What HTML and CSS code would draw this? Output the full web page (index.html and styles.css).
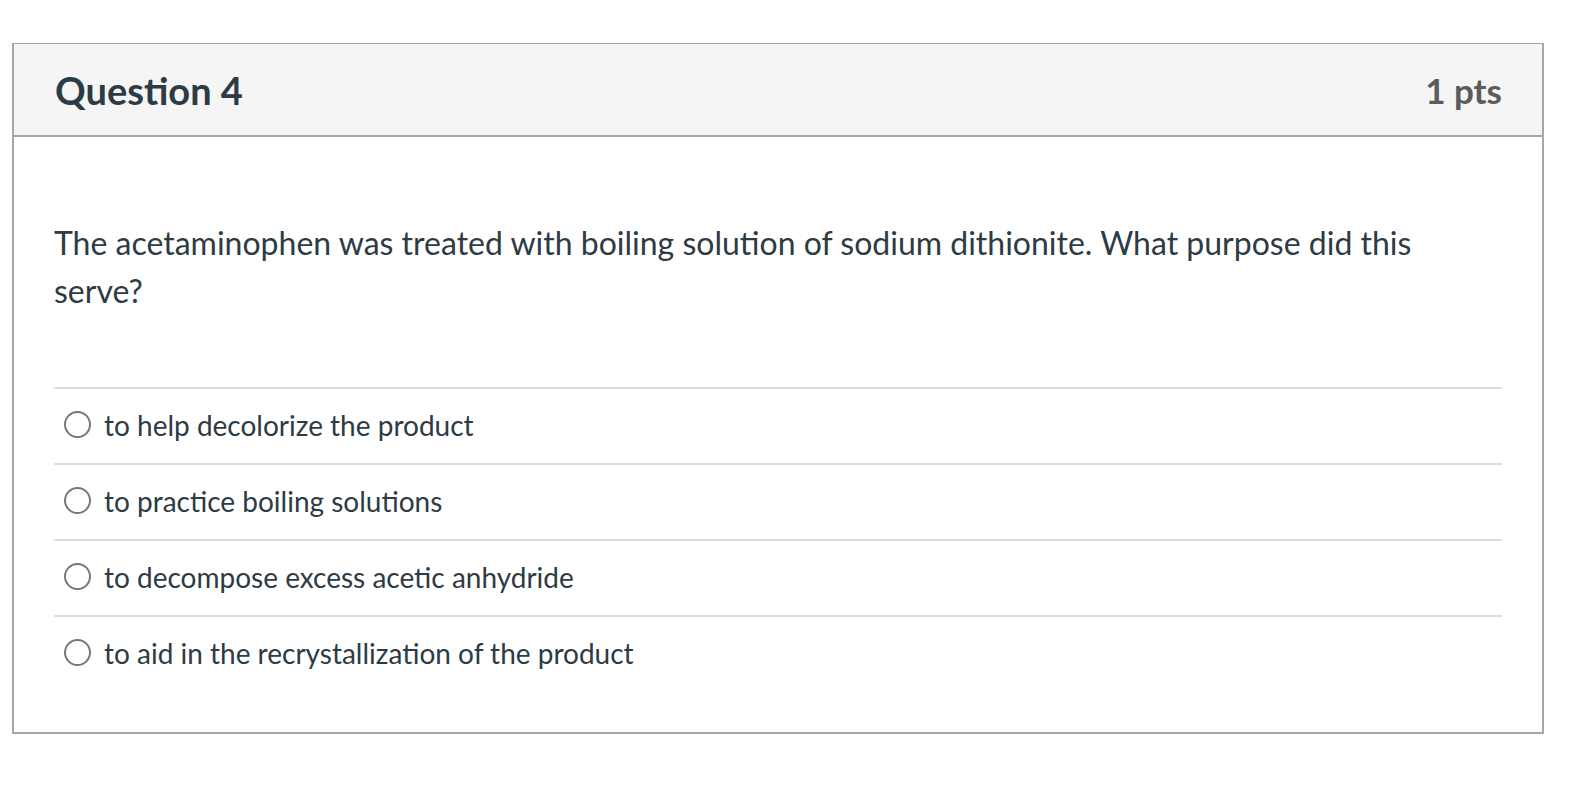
FILE: index.html
```html
<!DOCTYPE html>
<html lang="en">
<head>
<meta charset="utf-8">
<title>Question 4</title>
<link rel="stylesheet" href="styles.css">
</head>
<body>
<div class="question">
  <div class="header">
    <h2 class="title">Question 4</h2>
    <div class="pts">1 pts</div>
  </div>
  <div class="content">
    <p class="text">The acetaminophen was treated with boiling solution of sodium dithionite. What purpose did this serve?</p>
    <div class="answers">
      <label class="answer"><span class="radio"></span><span class="label">to help decolorize the product</span></label>
      <label class="answer"><span class="radio"></span><span class="label">to practice boiling solutions</span></label>
      <label class="answer"><span class="radio"></span><span class="label">to decompose excess acetic anhydride</span></label>
      <label class="answer"><span class="radio"></span><span class="label">to aid in the recrystallization of the product</span></label>
    </div>
  </div>
</div>
</body>
</html>
```

FILE: styles.css
```css
html, body {
  margin: 0;
  padding: 0;
  background: #ffffff;
}
body {
  font-family: Lato, "Liberation Sans", sans-serif;
  color: #2d3b45;
  padding: 43px 0 0 12px;
}
.question {
  width: 1528px;
  border: 2px solid #a7a7a7;
  border-top-width: 1px;
}
.header {
  display: flex;
  justify-content: space-between;
  align-items: center;
  height: 91px;
  padding: 0 40px 0 41px;
  background: #f5f5f5;
  border-bottom: 2px solid #a7a7a7;
}
.title {
  margin: 0;
  font-size: 38px;
  font-weight: 700;
  color: #2d3b45;
}
.pts {
  font-size: 35px;
  font-weight: 700;
  color: #5b5b5b;
}
.content {
  padding: 82px 40px 41px 40px;
}
.text {
  margin: 0 0 72px 0;
  font-size: 32px;
  line-height: 48px;
}
.answers {
  display: flex;
  flex-direction: column;
}
.answer {
  box-sizing: border-box;
  display: flex;
  align-items: center;
  gap: 13px;
  height: 76px;
  padding: 0 0 3px 10px;
  border-top: 2px solid #dddddd;
  font-size: 28px;
}
.radio {
  width: 23px;
  height: 23px;
  border: 2px solid #777777;
  border-radius: 50%;
  background: #fff;
  flex: none;
}
.label {
  color: #2d3b45;
}
```
